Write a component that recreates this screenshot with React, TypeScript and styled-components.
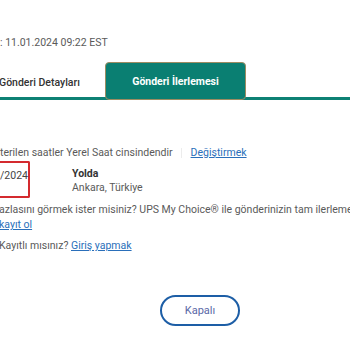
import React from "react";
import styled, { createGlobalStyle } from "styled-components";

const Global = createGlobalStyle`
  html, body { margin: 0; padding: 0; background: #fff; overflow: hidden; }
  body { font-family: Roboto, "Liberation Sans", Arial, sans-serif; color: #4d4d4d; }
`;

const Page = styled.div`
  width: 350px;
  height: 350px;
  overflow: hidden;
  padding-top: 35px;
  box-sizing: border-box;
`;

const DateLine = styled.div`
  font-size: 10.5px;
  line-height: 16px;
  color: #5a5a5a;
  white-space: nowrap;
`;

const TabBar = styled.div`
  margin-top: 11px;
  height: 35px;
  display: flex;
  align-items: stretch;
  border-bottom: 3px solid #0d8174;
`;

const Tab = styled.div<{ $active?: boolean }>`
  display: flex;
  align-items: center;
  box-sizing: border-box;
  font-size: 10.5px;
  white-space: nowrap;
  ${(p) =>
    p.$active
      ? `
    width: 141px;
    height: 38px;
    justify-content: center;
    background: #0a7f72;
    color: #fff;
    font-weight: 700;
    border: 1px solid #9c8c62;
    border-radius: 4px;
  `
      : `
    width: 106px;
    margin-left: -1px;
    padding-top: 6px;
    color: #333;
    font-weight: 500;
  `}
`;

const Notice = styled.div`
  margin-top: 45px;
  font-size: 10.5px;
  line-height: 16px;
  color: #5a5a5a;
  white-space: nowrap;
  display: flex;
  align-items: center;
`;

const Sep = styled.span`
  display: inline-block;
  width: 1px;
  height: 10px;
  background: #ececec;
  margin: 0 9px 0 8px;
`;

const Link = styled.a`
  color: #2a6fba;
  text-decoration: underline;
  cursor: pointer;
`;

const EventRow = styled.div`
  display: flex;
  align-items: flex-start;
`;

const DateCell = styled.div`
  box-sizing: border-box;
  width: 32px;
  height: 37px;
  margin-left: -2px;
  padding: 5px 0 0 2px;
  border: 2px solid #d42a2f;
  border-left: none;
  border-radius: 0 2px 2px 0;
  font-size: 10.5px;
  line-height: 16px;
  color: #444;
`;

const StatusCell = styled.div`
  margin-left: 42px;
  padding-top: 5px;
  display: flex;
  flex-direction: column;
`;

const StatusTitle = styled.div`
  font-size: 10.5px;
  line-height: 15px;
  font-weight: 700;
  color: #333;
`;

const StatusPlace = styled.div`
  font-size: 10.5px;
  line-height: 14px;
  color: #5a5a5a;
`;

const Para = styled.div<{ $top: number }>`
  margin-top: ${(p) => p.$top}px;
  margin-left: -1px;
  font-size: 10.5px;
  line-height: 15px;
  color: #5a5a5a;
  white-space: nowrap;
`;

const ButtonRow = styled.div`
  margin-top: 42px;
  padding-left: 160px;
`;

const CloseButton = styled.button`
  box-sizing: border-box;
  width: 80px;
  height: 31px;
  border: 2px solid #1d5ea6;
  border-radius: 16px;
  background: #fff;
  color: #5a68a6;
  font-family: Roboto, "Liberation Sans", Arial, sans-serif;
  font-size: 11px;
  cursor: pointer;
`;

export default function App() {
  return (
    <>
      <Global />
      <Page>
        <DateLine>: 11.01.2024 09:22 EST</DateLine>
        <TabBar>
          <Tab>Gönderi Detayları</Tab>
          <Tab $active>Gönderi İlerlemesi</Tab>
        </TabBar>
        <Notice>
          terilen saatler Yerel Saat cinsindendir
          <Sep />
          <Link>Değiştirmek</Link>
        </Notice>
        <EventRow>
          <DateCell>/2024</DateCell>
          <StatusCell>
            <StatusTitle>Yolda</StatusTitle>
            <StatusPlace>Ankara, Türkiye</StatusPlace>
          </StatusCell>
        </EventRow>
        <Para $top={4}>
          azlasını görmek ister misiniz? UPS My Choice® ile gönderinizin tam ilerlemesini
        </Para>
        <Para $top={0}>
          <Link>kayıt ol</Link>
        </Para>
        <Para $top={6}>
          Kayıtlı mısınız? <Link>Giriş yapmak</Link>
        </Para>
        <ButtonRow>
          <CloseButton>Kapalı</CloseButton>
        </ButtonRow>
      </Page>
    </>
  );
}
